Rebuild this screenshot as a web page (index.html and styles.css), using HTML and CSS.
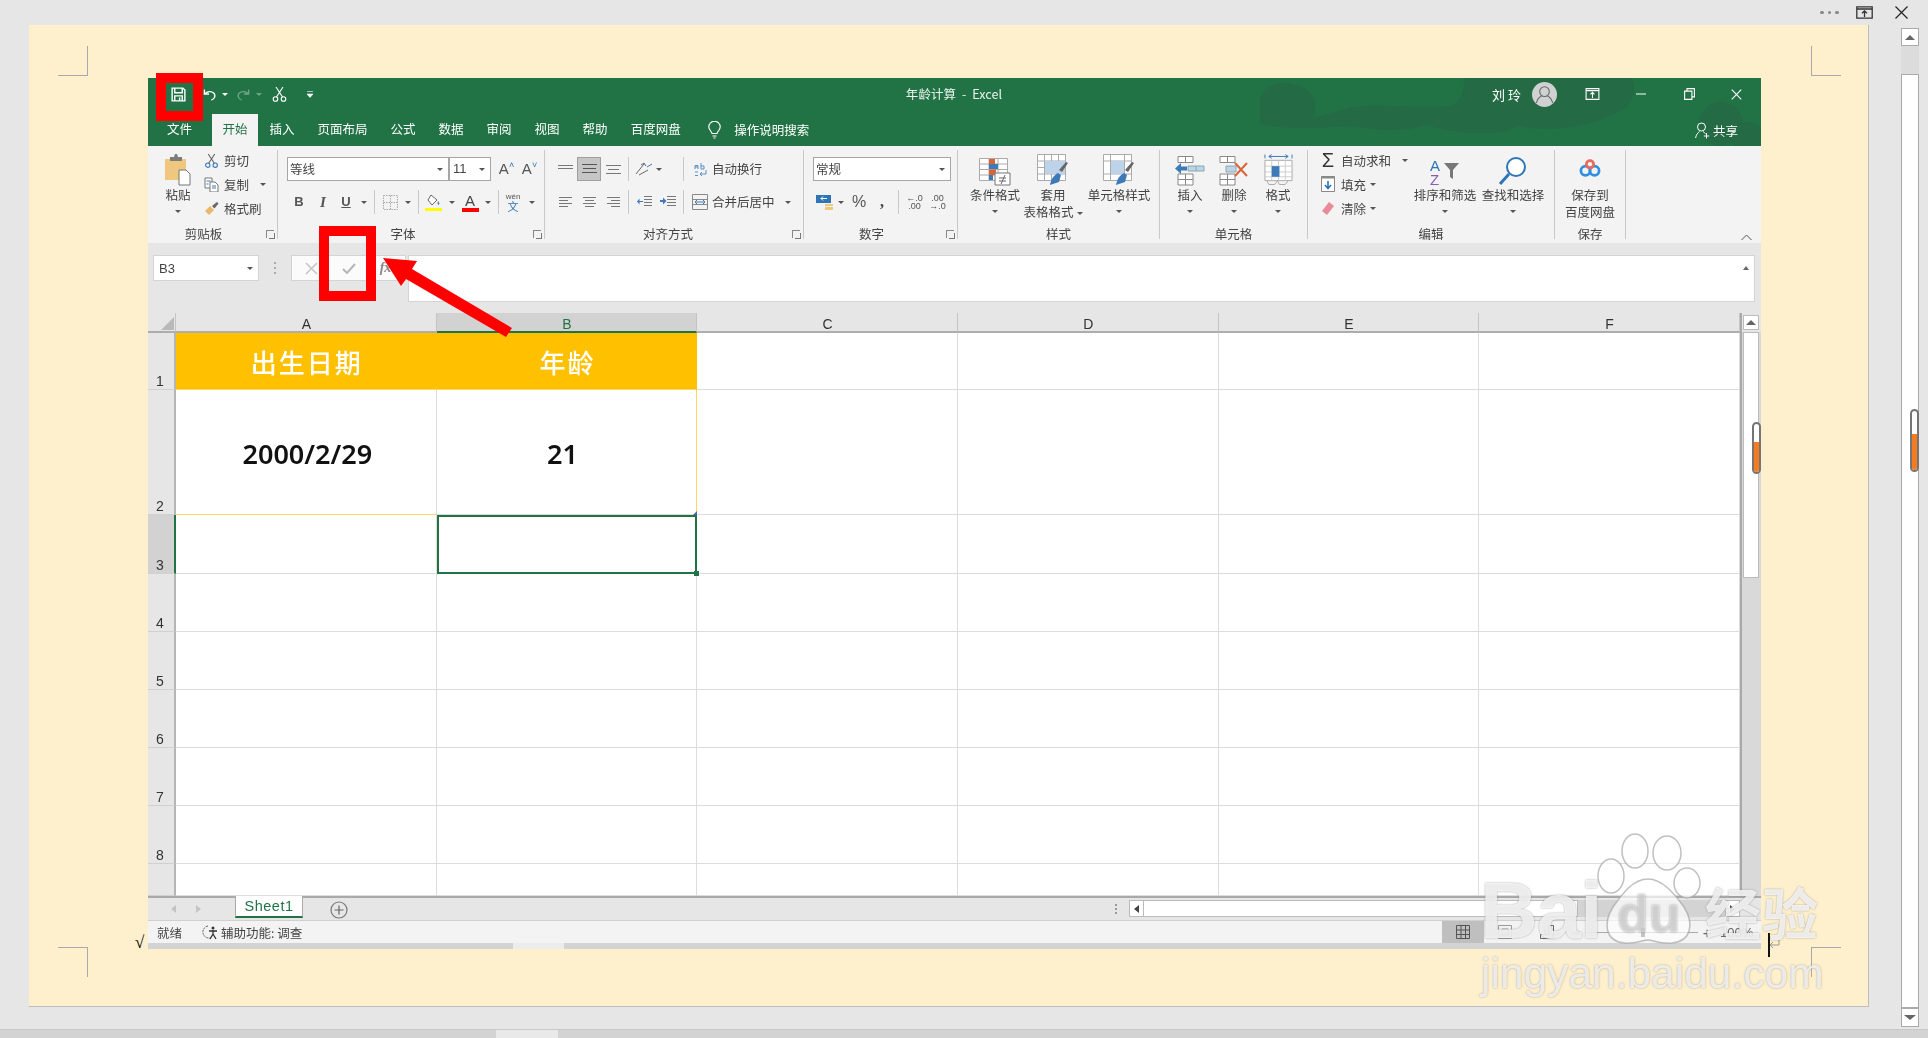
FILE: index.html
```html
<!DOCTYPE html>
<html lang="zh-CN">
<head>
<meta charset="utf-8">
<title>年龄计算 - Excel</title>
<link rel="stylesheet" href="styles.css">
</head>
<body>
<div class="screen">
  <header class="app-top">
    <span class="dots"><i></i><i></i><i></i></span>
    <svg class="top-ico" width="17" height="13" viewBox="0 0 17 13"><path d="M.8.8h15.400v11.400H.8zM1 3h15M8.500 11V5M6 7.200l2.500-2.400L11 7.200" fill="none" stroke="#333" stroke-width="1.300"/></svg>
    <svg class="top-x" width="13" height="13" viewBox="0 0 13 13"><path d="M.5.500l12 12M12.500.5l-12 12" stroke="#222" stroke-width="1.200"/></svg>
  </header>
  <div class="workspace">
    <main class="page">
      <section class="excel">
        <div class="green">
          <svg class="art" width="1613" height="68" viewBox="0 0 1613 68"><path d="M1112 30C1108 10 1130 2 1145 6c20 4 27 19 20 34l35-10c30-5 60 0 100-2 15-3 16-18 16-28h168c6 15-2 30-14 34-30 16-70 21-100 14-20 12-70 7-90-1-30 8-55 5-80 1-30 2-60 4-88-2z" fill="#246a44"/><circle cx="1573" cy="46" r="22" fill="#246a44"/><circle cx="1600" cy="60" r="16" fill="#246a44"/></svg>
          <div class="titlebar">
            <div class="qat">
              <svg class="q-save" width="15" height="15" viewBox="0 0 16 16"><path d="M1.200 1.200h11.500l2.100 2.100v11.500H1.200zM4 1.200v5h8v-5M4 14.800V9.500h8v5.300M9.200 11.200v3.400" fill="none" stroke="#fff" stroke-width="1.500"/></svg>
              <svg class="q-undo" width="13" height="13" viewBox="0 0 14 14"><path d="M1.500 1.500v5h5M2 6.500C4 3.500 9 3 11.500 5.500S12.500 12 9 13" fill="none" stroke="#fff" stroke-width="1.500"/></svg>
              <span class="dd dd-w q-dd"></span>
              <svg class="q-redo" width="13" height="13" viewBox="0 0 14 14"><path d="M12.500 1.500v5h-5M12 6.500C10 3.500 5 3 2.500 5.500S1.500 12 5 13" fill="none" stroke="#6ea388" stroke-width="1.500"/></svg>
              <span class="dd dd-dim q-dd"></span>
              <svg class="q-cut" width="15" height="16" viewBox="0 0 15 16"><circle cx="3.500" cy="13" r="2.300" fill="none" stroke="#fff" stroke-width="1.100"/><circle cx="11.500" cy="13" r="2.300" fill="none" stroke="#fff" stroke-width="1.100"/><path d="M4.500 11L11 1M10.500 11L4 1" stroke="#fff" stroke-width="1.100"/></svg>
              <svg class="q-more" width="6" height="7" viewBox="0 0 6 7"><path d="M0 .5h6M0 3h6L3 6.500z" fill="#fff" stroke="#fff" stroke-width=".6"/></svg>
            </div>
            <div class="doc-title">年龄计算&nbsp; -&nbsp; Excel</div>
            <div class="account">
              <span class="user">刘 玲</span>
              <svg class="avatar" width="25" height="25" viewBox="0 0 26 26"><circle cx="13" cy="13" r="13" fill="#cfd2d0"/><circle cx="13" cy="10" r="5" fill="none" stroke="#666" stroke-width="1.100"/><path d="M4.500 22c1-5 4-7 6-8M21.500 22c-1-5-4-7-6-8" fill="none" stroke="#666" stroke-width="1.100"/></svg>
              <svg class="w-ribbon" width="15" height="12" viewBox="0 0 14 12"><path d="M.6.600h12.800v10.800H.6zM.6 2.600h12.800M7 10V4.500M5 6.300l2-2 2 2" fill="none" stroke="#fff" stroke-width="1.100"/></svg>
              <svg class="w-min" width="10" height="2" viewBox="0 0 11 2"><path d="M0 1h11" stroke="#fff" stroke-width="1.100"/></svg>
              <svg class="w-rest" width="11" height="12" viewBox="0 0 11 12"><path d="M.6 3.100h7.300v8.300H.6zM3 3V.6h7.400v8.300H8" fill="none" stroke="#fff" stroke-width="1.100"/></svg>
              <svg class="w-close" width="11" height="11" viewBox="0 0 12 12"><path d="M.8.800l10.400 10.400M11.200.8L.8 11.200" stroke="#fff" stroke-width="1.200"/></svg>
            </div>
          </div>
          <nav class="tabs">
            <span class="tab tab-file">文件</span>
            <span class="tab tab-active">开始</span>
            <span class="tab">插入</span>
            <span class="tab">页面布局</span>
            <span class="tab">公式</span>
            <span class="tab">数据</span>
            <span class="tab">审阅</span>
            <span class="tab">视图</span>
            <span class="tab">帮助</span>
            <span class="tab">百度网盘</span>
            <svg class="bulb" width="13" height="18" viewBox="0 0 13 18"><path d="M4 12.500C3.500 10 .8 9 .8 6a5.700 5.700 0 0 1 11.400 0c0 3-2.700 4-3.200 6.500zM4.500 15h4M5.500 17h2" fill="none" stroke="#fff" stroke-width="1.100"/></svg>
            <span class="search">操作说明搜索</span>
            <span class="share"><svg width="15" height="17" viewBox="0 0 15 17"><circle cx="6.500" cy="5" r="4" fill="none" stroke="#fff"/><path d="M.6 16c.4-3 2-5 4-6.500M8 9.500c1 .6 1.800 1.300 2.400 2.300M11.500 11v5.500M8.800 14h5.400" fill="none" stroke="#fff"/></svg>共享</span>
          </nav>
        </div>

        <div class="ribbon">
          <div class="group g-clip">
            <div class="g-body clip-body">
              <div class="big paste">
                <svg class="big-ico" width="28" height="32" viewBox="0 0 28 32"><path d="M1 5h21v21H1z" fill="#efc77e"/><path d="M6 3h4l1-3h2l1 3h4v4H6z" fill="#7d7d7d"/><path d="M15 16h7l4 4v11H15z" fill="#fff" stroke="#777"/></svg>
                <span>粘贴</span>
                <span class="dd big-dd"></span>
              </div>
              <div class="small-list">
                <div class="small"><svg width="14" height="15" viewBox="0 0 15 16"><circle cx="3.500" cy="13" r="2.300" fill="none" stroke="#3d7ab8" stroke-width="1.200"/><circle cx="11.500" cy="13" r="2.300" fill="none" stroke="#3d7ab8" stroke-width="1.200"/><path d="M4.500 11L11 1M10.500 11L4 1" stroke="#666" stroke-width="1.200"/></svg><span>剪切</span></div>
                <div class="small"><svg width="15" height="15" viewBox="0 0 15 15"><path d="M1 1h7v10H1z" fill="#fff" stroke="#777"/><path d="M6 5h5l3 3v7H6z" fill="#fff" stroke="#777"/><path d="M2.500 4h4M2.500 7h2M8 9h4M8 11h4" stroke="#3d7ab8"/></svg><span>复制</span><span class="dd copy-dd"></span></div>
                <div class="small"><svg width="15" height="14" viewBox="0 0 15 14"><path d="M1 10l5-5 4 4-5 5z" fill="#e8b96b"/><path d="M8 5l5-4 1.500 1.500-4 5z" fill="#666"/></svg><span>格式刷</span></div>
              </div>
            </div>
            <div class="g-label lb-clip">剪贴板</div>
            <span class="launcher"></span>
          </div>

          <div class="group g-font">
            <div class="g-body rows">
              <div class="font-r1">
                <div class="combo font-name"><span>等线</span><span class="dd"></span></div>
                <div class="combo font-size"><span>11</span><span class="dd"></span></div>
                <span class="aa">A<sup>˄</sup></span>
                <span class="aa">A<sup>˅</sup></span>
              </div>
              <div class="font-r2 cells-c">
                <b class="fb">B</b>
                <i class="fb fi">I</i>
                <u class="fb">U</u>
                <span class="dd"></span>
                <span class="vsep"></span>
                <svg width="15" height="15" viewBox="0 0 15 15"><path d="M.5.500h14v14H.5zM7.500.5v14M.5 7.500h14" fill="none" stroke="#aaa" stroke-dasharray="1.500 1"/></svg>
                <span class="dd"></span>
                <span class="vsep"></span>
                <svg width="17" height="17" viewBox="0 0 17 17"><path d="M6 1l6 5-5 5-4-5z" fill="#fff" stroke="#666"/><path d="M13 7c1 1.500 2 2.500 1 3.500s-2-.5-1-3.500z" fill="#3d7ab8"/><path d="M0 14h17v3H0z" fill="#ff0"/></svg>
                <span class="dd"></span>
                <span class="fcolor">A</span>
                <span class="dd"></span>
                <span class="vsep"></span>
                <span class="wen"><small>wén</small>文</span>
                <span class="dd"></span>
              </div>
            </div>
            <div class="g-label lb-font">字体</div>
            <span class="launcher"></span>
          </div>

          <div class="group g-align">
            <div class="g-body rows">
              <div class="align-r align-r1 cells-c">
                <svg width="15" height="9" viewBox="0 0 15 9"><path d="M0 .5h15M0 3.500h15" stroke="#777"/></svg>
                <span class="sel-box"><svg width="15" height="10" viewBox="0 0 15 10"><path d="M0 .5h15M1 4.500h13M0 8.500h15" stroke="#555"/></svg></span>
                <svg width="15" height="9" viewBox="0 0 15 9"><path d="M0 .5h15M2 4.500h11M0 8.500h15" stroke="#777"/></svg>
                <span class="vsep"></span>
                <svg width="18" height="14" viewBox="0 0 18 14"><path d="M1 12L9 2M4 13l9-5M6 3l3-2 2 3" fill="none" stroke="#666"/><path d="M12 5l5-3" stroke="#3d7ab8"/></svg>
                <span class="dd orient-dd"></span>
                <span class="vsep"></span>
                <svg width="14" height="15" viewBox="0 0 14 15"><path d="M2 7V3.500h3V7M2 5h3M8 1v6h3V4H8M2 10h3M2 13.500h3M13 8v4H7M9 10l-2 2 2 2" fill="none" stroke="#5b8fc7"/></svg>
                <span class="t12">自动换行</span>
              </div>
              <div class="align-r cells-c">
                <svg width="13" height="10" viewBox="0 0 13 10"><path d="M0 .5h13M0 3.500h9M0 6.500h13M0 9.500h9" stroke="#777"/></svg>
                <svg width="13" height="10" viewBox="0 0 13 10"><path d="M0 .5h13M2 3.500h9M0 6.500h13M2 9.500h9" stroke="#777"/></svg>
                <svg width="13" height="10" viewBox="0 0 13 10"><path d="M0 .5h13M4 3.500h9M0 6.500h13M4 9.500h9" stroke="#777"/></svg>
                <span class="vsep"></span>
                <svg width="15" height="12" viewBox="0 0 15 12"><path d="M7 .5h8M7 3.500h8M7 6.500h8M7 9.500h8" stroke="#777"/><path d="M6 5H2.500V2.500L0 5.500l2.500 3V6H6z" fill="#3d7ab8"/></svg>
                <svg width="16" height="12" viewBox="0 0 16 12"><path d="M7 .5h9M7 3.500h9M7 6.500h9M7 9.500h9" stroke="#777"/><path d="M0 4h3V1.500L6.500 5 3 8.500V6H0z" fill="#3d7ab8"/></svg>
                <span class="vsep"></span>
                <svg width="16" height="16" viewBox="0 0 16 16"><path d="M.5.500h15v15H.5zM.5 5.500h15M.5 10.500h15" fill="none" stroke="#888"/><path d="M3 8h10M3 8l2-2M3 8l2 2M13 8l-2-2M13 8l-2 2" fill="none" stroke="#3d7ab8"/></svg>
                <span class="t12">合并后居中</span>
              </div>
              <span class="dd merge-dd"></span>
            </div>
            <div class="g-label lb-align">对齐方式</div>
            <span class="launcher"></span>
          </div>

          <div class="group g-num">
            <div class="g-body rows">
              <div class="font-r1"><div class="combo num-fmt"><span>常规</span><span class="dd"></span></div></div>
              <div class="num-r cells-c">
                <svg width="17" height="15" viewBox="0 0 17 15"><path d="M0 0h15v8H0z" fill="#2e75b6"/><path d="M5 3.500h6M5 3.500l2-2M5 3.500l2 2" stroke="#fff" fill="none"/><path d="M9 9h8v2H9zM9 12h8v3H9z" fill="#efc77e"/></svg>
                <span class="dd"></span>
                <span class="pct">%</span>
                <span class="comma">,</span>
                <span class="vsep"></span>
                <span class="dec"><span>←.0</span><span>.00</span></span>
                <span class="dec"><span>.00</span><span>→.0</span></span>
              </div>
            </div>
            <div class="g-label lb-num">数字</div>
            <span class="launcher"></span>
          </div>

          <div class="group g-style">
            <div class="g-body style-body">
              <div class="big">
                <svg class="big-ico" width="32" height="28" viewBox="0 0 32 28"><path d="M.5.500h28v22H.5zM10 .5v22M19 .5v22M.5 6h28M.5 11.500h28M.5 17h28" fill="#fff" stroke="#aaa"/><path d="M10 1h6v5h-6z" fill="#d9643a"/><path d="M10 6h9v5h-9z" fill="#3d7ab8"/><path d="M10 11.500h7V17h-7z" fill="#d9643a"/><path d="M10 17h4v5h-4z" fill="#3d7ab8"/><path d="M16 15h15v12H16z" fill="#fff" stroke="#777"/><path d="M20 20h7M20 23h7M26 17l-4 9" stroke="#666" fill="none"/></svg>
                <span>条件格式</span><span class="dd big-dd"></span>
              </div>
              <div class="big">
                <svg class="big-ico" width="32" height="32" viewBox="0 0 32 32"><path d="M.5.500h28v26H.5zM7.500.5v26M14.500.5v26M21.500.5v26M.5 7h28M.5 13.500h28M.5 20h28" fill="#fff" stroke="#aaa"/><path d="M8 7h20v13H8z" fill="#bcd3ea"/><path d="M31 9l-6 9-3-2 7-8z" fill="#666"/><path d="M21 19l3 2-2 7-9 3c1-6 4-10 8-12z" fill="#3d7ab8"/></svg>
                <span class="two">套用<br>表格格式<span class="dd inline-dd"></span></span>
              </div>
              <div class="big">
                <svg class="big-ico" width="32" height="32" viewBox="0 0 32 32"><path d="M.5.500h28v26H.5zM7.500.5v26M21.500.5v26M.5 7h28M.5 20h28" fill="#fff" stroke="#aaa"/><path d="M8 7h13v13H8z" fill="#bcd3ea"/><path d="M31 9l-6 9-3-2 7-8z" fill="#666"/><path d="M21 19l3 2-2 7-9 3c1-6 4-10 8-12z" fill="#3d7ab8"/></svg>
                <span>单元格样式</span><span class="dd big-dd"></span>
              </div>
            </div>
            <div class="g-label">样式</div>
          </div>

          <div class="group g-cell">
            <div class="g-body cell-body">
              <div class="big">
                <svg class="big-ico" width="30" height="30" viewBox="0 0 30 30"><path d="M3 .5h15v6H3zM10.500.5v6M3 18h15v11H3zM3 23.500h15M10.500 18v11" fill="#fff" stroke="#888"/><path d="M13 10h16v5H13zM21 10v5" fill="#bcd3ea" stroke="#8aa"/><path d="M0 12.500L6 7v3.500h6v4H6V18z" fill="#3d7ab8"/></svg>
                <span>插入</span><span class="dd big-dd"></span>
              </div>
              <div class="big">
                <svg class="big-ico" width="30" height="30" viewBox="0 0 30 30"><path d="M1 .5h15v6H1zM8.500.5v6M1 18h15v11H1zM1 23.500h15M8.500 18v11" fill="#fff" stroke="#888"/><path d="M7 10h10v6H7z" fill="#bcd3ea" stroke="#8aa"/><path d="M16 7l12 13M28 7L16 20" stroke="#d9643a" stroke-width="2"/></svg>
                <span>删除</span><span class="dd big-dd"></span>
              </div>
              <div class="big">
                <svg class="big-ico" width="29" height="32" viewBox="0 0 30 32"><path d="M1 6h28v21H1z" fill="#fff" stroke="#aaa"/><path d="M1 12h28M1 18h28M1 23h28M8 6v21M15 6v21M22 6v21" stroke="#ccc"/><path d="M8 12h8v11H8z" fill="#3d7ab8"/><path d="M5 2h20M5 2l3-2M5 2l3 2M25 2l-3-2M25 2l-3 2M1 0v4M29 0v4" stroke="#3d7ab8" fill="none"/><path d="M3 27l2 4h6l3-4M14 27l2 4h6l3-4" fill="none" stroke="#aaa"/></svg>
                <span>格式</span><span class="dd big-dd"></span>
              </div>
            </div>
            <div class="g-label">单元格</div>
          </div>

          <div class="group g-edit">
            <div class="g-body edit-body">
              <div class="small-list edit-list">
                <div class="small"><span class="sigma">Σ</span><span>自动求和</span><span class="dd sum-dd"></span></div>
                <div class="small"><svg width="14" height="16" viewBox="0 0 14 16"><path d="M.5.500h13v15H.5z" fill="#fff" stroke="#888"/><path d="M.5.500h13v2H.5z" fill="#888"/><path d="M7 5v7M4 9l3 3.500L10 9" fill="none" stroke="#2e75b6" stroke-width="1.600"/></svg><span>填充</span><span class="dd tight-dd"></span></div>
                <div class="small"><svg width="14" height="15" viewBox="0 0 14 15"><path d="M8 1l5 4-7 9-5-4z" fill="#e78a9a"/></svg><span>清除</span><span class="dd tight-dd"></span></div>
              </div>
              <div class="big">
                <svg class="big-ico" width="30" height="28" viewBox="0 0 30 28"><text x="0" y="13" class="az az-a">A</text><text x="0" y="27" class="az az-z">Z</text><path d="M14 5h15l-6 7v9l-3-2v-7z" fill="#777"/></svg>
                <span>排序和筛选</span><span class="dd big-dd"></span>
              </div>
              <div class="big">
                <svg class="big-ico" width="30" height="30" viewBox="0 0 30 30"><circle cx="18" cy="11" r="9" fill="#fff" stroke="#2e75b6" stroke-width="2"/><path d="M11 18L2 28" stroke="#2e75b6" stroke-width="3"/></svg>
                <span>查找和选择</span><span class="dd big-dd"></span>
              </div>
            </div>
            <div class="g-label">编辑</div>
          </div>

          <div class="group g-save">
            <div class="g-body save-body">
              <div class="big">
                <svg class="big-ico save-ico" width="22" height="20" viewBox="0 0 24 22"><circle cx="7" cy="14" r="5" fill="none" stroke="#2e8fe0" stroke-width="3"/><circle cx="17" cy="14" r="5" fill="none" stroke="#2e8fe0" stroke-width="3"/><circle cx="12" cy="7" r="4" fill="none" stroke="#e76a5a" stroke-width="3"/></svg>
                <span class="two">保存到<br>百度网盘</span>
              </div>
            </div>
            <div class="g-label">保存</div>
          </div>
          <svg class="collapse" width="11" height="7" viewBox="0 0 11 7"><path d="M.5 6l5-5 5 5" fill="none" stroke="#555"/></svg>
        </div>

        <div class="formula">
          <div class="namebox"><span>B3</span><span class="dd"></span></div>
          <span class="fdots"></span>
          <div class="fbtns">
            <svg width="13" height="13" viewBox="0 0 13 13"><path d="M1 1l11 11M12 1L1 12" stroke="#c4c4c4" stroke-width="1.500"/></svg>
            <svg width="14" height="11" viewBox="0 0 14 11"><path d="M1 6l4 4 8-9" fill="none" stroke="#b5b5b5" stroke-width="2"/></svg>
            <span class="fx">fx</span>
          </div>
          <div class="finput"><span class="fcaret"></span></div>
        </div>

        <div class="sheet">
          <div class="grid">
            <div class="corner"><svg width="13" height="13" viewBox="0 0 13 13"><path d="M13 0v13H0z" fill="#b9b9b9"/></svg></div>
            <div class="ch">A</div><div class="ch ch-sel">B</div><div class="ch">C</div><div class="ch">D</div><div class="ch">E</div><div class="ch">F</div>

            <div class="rh">1</div>
            <div class="c c-head">出生日期</div><div class="c c-head c-b">年龄</div><div class="c"></div><div class="c"></div><div class="c"></div><div class="c"></div>

            <div class="rh">2</div>
            <div class="c c-val c-yb">2000/2/29</div><div class="c c-val c-yr c-age">21<span class="err"></span></div><div class="c"></div><div class="c"></div><div class="c"></div><div class="c"></div>

            <div class="rh rh-sel">3</div>
            <div class="c"></div><div class="c c-sel"><span class="handle"></span></div><div class="c"></div><div class="c"></div><div class="c"></div><div class="c"></div>

            <div class="rh">4</div><div class="c"></div><div class="c"></div><div class="c"></div><div class="c"></div><div class="c"></div><div class="c"></div>
            <div class="rh">5</div><div class="c"></div><div class="c"></div><div class="c"></div><div class="c"></div><div class="c"></div><div class="c"></div>
            <div class="rh">6</div><div class="c"></div><div class="c"></div><div class="c"></div><div class="c"></div><div class="c"></div><div class="c"></div>
            <div class="rh">7</div><div class="c"></div><div class="c"></div><div class="c"></div><div class="c"></div><div class="c"></div><div class="c"></div>
            <div class="rh">8</div><div class="c"></div><div class="c"></div><div class="c"></div><div class="c"></div><div class="c"></div><div class="c"></div>
            <div class="rh"></div><div class="c"></div><div class="c"></div><div class="c"></div><div class="c"></div><div class="c"></div><div class="c"></div>
          </div>
          <div class="vscroll">
            <span class="vs-btn"><i class="up"></i></span>
            <span class="vs-thumb"></span>
          </div>
        </div>

        <div class="tabbar">
          <span class="nav"><i class="tri-l"></i><i class="tri-r"></i></span>
          <span class="sheet-tab">Sheet1</span>
          <svg class="add" width="18" height="18" viewBox="0 0 18 18"><circle cx="9" cy="9" r="8" fill="none" stroke="#777" stroke-width="1.200"/><path d="M9 4.500v9M4.500 9h9" stroke="#666" stroke-width="1.200"/></svg>
          <span class="h-dots"></span>
          <span class="hs-btn"><i class="tri-l dark"></i></span>
          <span class="hs-thumb"></span>
          <span class="hs-track"></span>
          <span class="hs-btn"><i class="tri-r dark"></i></span>
        </div>

        <div class="status">
          <span class="ready">就绪</span>
          <svg class="acc" width="16" height="15" viewBox="0 0 16 15"><path d="M6 1a6 6 0 1 0 2 12" fill="none" stroke="#555" stroke-dasharray="2 1"/><circle cx="11" cy="3" r="1.500" fill="#333"/><path d="M7 6h8M11 5v4l-3 5M11 9l3 5" fill="none" stroke="#333" stroke-width="1.300"/></svg>
          <span class="acc-t">辅助功能: 调查</span>
          <div class="views">
            <span class="view view-sel"><svg width="14" height="14" viewBox="0 0 14 14"><path d="M.5.500h13v13H.5zM5 .5v13M9.500.5v13M.5 5h13M.5 9.500h13" fill="none" stroke="#555"/></svg></span>
            <span class="view"><svg width="14" height="14" viewBox="0 0 14 14"><path d="M.5.500h13v13H.5zM4 4h6v6H4z" fill="none" stroke="#999"/></svg></span>
            <span class="view"><svg width="14" height="14" viewBox="0 0 14 14"><path d="M.5 13.500h13V.5H9v9H.5zM5 9.500V4" fill="none" stroke="#666"/></svg></span>
            <span class="zoom-ctrl"><span>−</span><span class="slider"><i></i></span><span>+</span></span>
            <span class="pct100">100%</span>
          </div>
        </div>
        <div class="strip"><span></span></div>
      </section>
    </main>
    <aside class="doc-scroll">
      <span class="ds-btn"><i class="up"></i></span>
      <span class="ds-track"></span>
      <span class="ds-thumb"></span>
      <span class="ds-btn ds-down"><i class="down"></i></span>
    </aside>
  </div>
  <footer class="hscroll"><span></span></footer>

  <span class="mark m-tl"></span><span class="mark m-tr"></span><span class="mark m-bl"></span><span class="mark m-br"></span>
  <span class="sqrt">√</span>
  <span class="cursor"></span>
  <svg class="para" width="11" height="9" viewBox="0 0 11 9"><path d="M10 0v5H1M4 2L1 5l3 3" fill="none" stroke="#999"/></svg>
  <span class="handle-o h1"><i></i></span>
  <span class="handle-o h2"><i></i></span>
  <span class="redbox r-save"></span>
  <span class="redbox r-check"></span>
  <svg class="arrow" width="140" height="90" viewBox="380 254 140 90"><path d="M383 258l34 3-5 8 100 59-6 9-100-58-5 7z" fill="#f00"/></svg>
  <div class="wm">
    <svg class="wm-paw" width="112" height="116" viewBox="0 0 112 116"><g fill="rgba(255,255,255,.68)" stroke="rgba(165,165,165,.7)" stroke-width="1.500"><ellipse cx="40" cy="20" rx="13" ry="17"/><ellipse cx="72" cy="22" rx="14" ry="17"/><ellipse cx="16" cy="45" rx="13" ry="17"/><ellipse cx="92" cy="52" rx="13" ry="15"/><path d="M53 48c14 0 26 14 36 28 10 16 8 34-12 36-14 1-18-3-24-3s-12 4-24 3C10 110 8 92 18 76c10-14 20-28 35-28z"/></g></svg>
    <span class="wm-bai">Bai</span>
    <span class="wm-du">du</span>
    <span class="wm-jy">经验</span>
    <span class="wm-url">jingyan.baidu.com</span>
  </div>
</div>
</body>
</html>
```
FILE: styles.css
```css
*{box-sizing:border-box}
html,body{margin:0;padding:0;background:#e6e6e6}
body{font-family:"Noto Sans CJK SC","Noto Sans",sans-serif;color:#444}
i{display:block}
svg{display:block;flex:none}

.screen{position:relative;width:1928px;height:1038px;overflow:hidden;display:flex;flex-direction:column;background:#e6e6e6}
.app-top{height:25px;flex:none;display:flex;align-items:center;padding-left:1820px}
.dots{display:flex;gap:4px;width:36px}
.dots i{width:3.500px;height:3.500px;border-radius:50%;background:#888}
.top-x{margin-left:22px}
.workspace{display:flex;height:1004px;flex:none;padding-left:29px}
.page{width:1840px;height:982px;background:#fff0cd;border-right:1px solid #bdbdbd;border-bottom:1px solid #bdbdbd;padding:53px 0 0 119px}
.doc-scroll{margin-left:32px;width:18px;display:flex;flex-direction:column;padding-top:3px}
.ds-btn{width:18px;height:18px;background:#fff;border:1px solid #aaa;display:flex;align-items:center;justify-content:center;flex:none}
.ds-track{height:28px;background:#dcdcdc;flex:none}
.ds-thumb{height:934px;background:#fff;border:1px solid #aaa;flex:none}
.ds-down{height:19px}
.up{width:0;height:0;border:5px solid transparent;border-top:0;border-bottom:5px solid #666}
.down{width:0;height:0;border:6px solid transparent;border-bottom:0;border-top:5px solid #666}
.hscroll{height:9px;background:#d3d3d3;flex:none;padding-left:496px;border-top:1px solid #c8c8c8}
.hscroll span{display:block;width:62px;height:100%;background:#e9e9e9}

.excel{width:1613px;height:871px;display:flex;flex-direction:column;background:#f3f3f3;filter:blur(.35px)}
.green{position:relative;background:#217346;height:68px;flex:none;color:#fff;font-size:12.500px;overflow:hidden}
.art{position:absolute;left:0;top:0}
.titlebar{position:relative;height:36px;display:flex;align-items:center;padding-bottom:4px}
.qat{width:600px;display:flex;align-items:center;padding-left:23px}
.q-undo{margin-left:17px}
.q-dd{margin-left:6px}
.q-redo{margin-left:9px}
.q-cut{margin-left:10px}
.q-more{margin-left:20px}
.doc-title{width:412px;text-align:center;font-size:12.500px;letter-spacing:.1px;color:#eaf3ee;margin-top:-2px}
.account{margin-left:auto;display:flex;align-items:center;padding-right:19px}
.user{font-size:13px;margin-right:11px}
.w-ribbon{margin-left:28px}
.w-min{margin-left:36px}
.w-rest{margin-left:38px}
.w-close{margin-left:36px}
.tabs{position:relative;height:32px;display:flex;align-items:center;padding-left:7.500px}
.tab{padding:0 11.500px;height:32px;line-height:29px;white-space:nowrap}
.tab-active{background:#f3f3f3;color:#217346;padding:0 10.500px;margin-left:8.500px;width:46px}
.bulb{margin-left:16px}
.search{margin-left:13px;margin-top:-2px}
.share{margin-left:auto;margin-right:23px;display:flex;align-items:center;gap:3px}

.dd{display:inline-block;width:0;height:0;border:3px solid transparent;border-bottom:0;border-top:3.500px solid #555;flex:none}
.dd-w{border-top-color:#fff}
.dd-dim{border-top-color:#6ea388}

.ribbon{position:relative;height:97px;flex:none;background:#f3f3f3;display:flex;padding-top:4px;font-size:12.500px;line-height:17px;color:#444}
.group{position:relative;height:89px;border-right:1px solid #c9c9c9;display:flex;flex-direction:column;flex:none}
.g-body{height:77px;flex:none}
.g-label{height:14px;line-height:13px;text-align:center;white-space:nowrap}
.launcher{position:absolute;right:3px;bottom:1px;width:8px;height:8px;border-left:1px solid #888;border-top:1px solid #888}
.launcher::after{content:"";position:absolute;left:2px;top:2px;width:5px;height:5px;border-right:1px solid #777;border-bottom:1px solid #777}
.g-clip{width:130px}
.g-font{width:267px}
.g-align{width:259px}
.g-num{width:154px}
.g-style{width:202px}
.g-cell{width:148px}
.g-edit{width:247px}
.g-save{width:71px}
.lb-clip{padding-right:18px}
.lb-font{padding-right:16px}
.lb-align{padding-right:12px}
.lb-num{padding-right:18px}

.big{display:grid;grid-template-rows:33px auto auto;align-content:start;padding-top:3px;justify-items:center;white-space:nowrap}
.big-ico{align-self:end;overflow:visible}
.big-dd{margin-top:7px}
.two{text-align:center}
.inline-dd{margin-left:3px;vertical-align:middle}
.clip-body{display:flex}
.clip-body .paste{width:56px;padding-left:4px}
.small-list{display:flex;flex-direction:column;margin-top:-2px}
.small{height:24px;display:flex;align-items:center;white-space:nowrap}
.g-clip .small svg{width:15px;margin-right:5px}
.copy-dd{margin-left:11px}
.rows{display:flex;flex-direction:column;padding:7px 0 0 9px;gap:9px;position:relative}
.font-r1{height:24px;display:flex;align-items:center}
.combo{height:24px;background:#fff;border:1px solid #a6a6a6;display:flex;align-items:center;justify-content:space-between;padding:0 5px 0 2px;line-height:20px;font-size:12.500px}
.font-name{width:162px}
.font-size{width:42px;margin-right:4px;font-family:"Liberation Sans",sans-serif;padding-left:3px;font-size:13px}
.aa{width:23px;text-align:center;font:15px/20px "Liberation Sans",sans-serif;color:#555}
.aa sup{font-size:9px;line-height:0;color:#2e75b6}
.cells-c{display:grid;align-items:center;justify-items:center;height:24px}
.font-r2{grid-template-columns:24px 24px 22px 14px 6px 26px 10px 10px 20px 18px 18px 18px 2px 28px 10px}
.fb{font:bold 13px/20px "Liberation Sans",sans-serif;color:#555}
.fi{font-style:italic;font-family:"Liberation Serif",serif;font-size:15px}
.vsep{display:block;width:1px;height:24px;background:#c9c9c9}
.fcolor{width:17px;height:19px;text-align:center;font:15px/15px "Liberation Sans",sans-serif;color:#444;border-bottom:4px solid #f00}
.wen{display:flex;flex-direction:column;align-items:center;line-height:10px;font-size:11px;color:#2e75b6}
.wen small{font:8px/8px "Liberation Sans",sans-serif;color:#555}
.align-r{grid-template-columns:23px 24px 24px 6px 26px 21px 10px 24px auto}
.sel-box{width:24px;height:24px;background:#c6c6c6;border:1px solid #9f9f9f;display:flex;align-items:center;justify-content:center}
.orient-dd{justify-self:start;margin-left:-1px}
.t12{justify-self:start;white-space:nowrap;margin-top:-2px}
.merge-dd{position:absolute;left:240px;top:51px}
.num-fmt{width:138px}
.num-r{grid-template-columns:22px 12px 24px 22px 10px 23px 23px}
.pct{font:16px/20px "Liberation Sans",sans-serif;color:#555}
.comma{font:bold 16px/14px "Liberation Serif",serif;color:#444}
.dec{display:flex;flex-direction:column;font:9px/8px "Liberation Sans",sans-serif;color:#555;align-items:center;white-space:nowrap}
.style-body{display:grid;grid-template-columns:54px 62px 70px;padding-left:10px;justify-items:center}
.cell-body{display:grid;grid-template-columns:44px 44px 44px;padding-left:8px;justify-items:center}
.edit-body{display:grid;grid-template-columns:101px 72px 64px;justify-items:center}
.edit-list{justify-self:start;padding-left:13px}
.edit-list .small svg,.sigma{width:14px;margin-right:6px;text-align:center}
.sigma{font:20px/20px "Liberation Sans",sans-serif;color:#333}
.sum-dd{margin-left:11px}
.tight-dd{margin-left:4px}
.save-body{display:flex;justify-content:center}
.save-ico{align-self:start;margin-top:5px}
.az{font:15px "Liberation Sans",sans-serif}
.az-a{fill:#2e75b6}
.az-z{fill:#8a5bb5}
.collapse{position:absolute;left:1593px;top:88px}

.formula{height:70px;flex:none;background:#e6e6e6;display:flex;align-items:flex-start;padding:12px 0 0 5px;font-size:12.500px}
.namebox{width:106px;height:26px;background:#fff;border:1px solid #d4d4d4;display:flex;align-items:center;justify-content:space-between;padding:0 5px;font-family:"Liberation Sans",sans-serif;font-size:13px}
.fdots{width:2px;height:12px;margin:7px 15px 0 15px;background:repeating-linear-gradient(#aaa 0 2px,transparent 2px 5px);flex:none}
.fbtns{width:115px;height:26px;background:#fbfbfb;border:1px solid #d4d4d4;display:grid;grid-template-columns:38px 37px 37px;align-items:center;justify-items:center;flex:none}
.fx{font:italic bold 14px "Liberation Serif",serif;color:#888}
.finput{width:1347px;height:47px;margin-left:2px;background:#fff;border:1px solid #d4d4d4;position:relative;flex:none}
.fcaret{position:absolute;right:5px;top:10px;width:0;height:0;border:3.500px solid transparent;border-top:0;border-bottom:4px solid #666}

.sheet{height:583px;flex:none;display:flex;overflow:hidden}
.grid{width:1592px;display:grid;grid-template-columns:28px repeat(6,260.667px);grid-template-rows:20px 57px 125px 59px 58px 58px 58px 58px 58px 32px;background:#fff}
.corner{background:#e6e6e6;border-right:1px solid #c4c4c4;border-bottom:2px solid #adadad;padding:4px 0 0 13px}
.ch{background:#e6e6e6;border-bottom:2px solid #adadad;border-right:1px solid #c4c4c4;text-align:center;font:14px/19px "Liberation Sans",sans-serif;color:#333;padding:2px 0 0 1px}
.ch-sel{background:#d2d2d2;color:#217346;border-bottom-color:#217346}
.rh{background:#e6e6e6;border-right:2px solid #b5b5b5;border-bottom:1px solid #d0d0d0;display:flex;align-items:flex-end;justify-content:center;font:14px/16px "Liberation Sans",sans-serif;color:#333;padding-right:2px}
.rh-sel{background:#d2d2d2;border-right-color:#217346}
.c{background:#fff;border-right:1px solid #dcdcdc;border-bottom:1px solid #dcdcdc;position:relative}
.c-head{background:#ffc000;color:#fff;border-color:#ffc000;border-bottom-color:#ffd86b;display:flex;align-items:center;justify-content:center;font-size:26px;font-weight:500;letter-spacing:2px;padding-left:2px}
.c-val{display:flex;align-items:center;justify-content:center;font:600 27px "Noto Sans",sans-serif;color:#111;padding:2px 0 0 3px}
.c-age{padding:2px 8px 0 0}
.c-yb{border-bottom:1px solid #ffd666}
.c-yr{border-right:1px solid #ffd666}
.err{position:absolute;right:-1px;bottom:-1px;width:0;height:0;border-left:4px solid transparent;border-bottom:4px solid #4a5fbf}
.c-sel{box-shadow:0 0 0 2px #217346 inset;border:0;z-index:1}
.handle{position:absolute;right:-2px;bottom:-2px;width:5px;height:5px;background:#217346;border:0}

.vscroll{width:21px;background:#d9d9d9;display:flex;flex-direction:column;border-left:2px solid #a9a9a9;position:relative;padding-left:1px}
.vs-btn{height:15px;margin:2px 2px 2px 0;background:#fff;border:1px solid #bbb;display:flex;align-items:center;justify-content:center;flex:none;position:relative}
.vscroll::before{content:"";position:absolute;left:0;right:0;top:0;height:19px;background:#e6e6e6;z-index:0}
.vs-btn .up{position:relative}
.vs-thumb{position:relative;height:246px;margin-right:2px;background:#fff;border:1px solid #bbb;flex:none}

.tabbar{height:25px;flex:none;background:#e6e6e6;display:flex;align-items:flex-start;border-top:2px solid #a9a9a9;position:relative;border-bottom:1px solid #d0d0d0}
.nav{width:87px;height:22px;display:flex;align-items:center;gap:20px;padding-left:23px}
.tri-l{width:0;height:0;border:4px solid transparent;border-left:0;border-right:5px solid #c4c4c4}
.tri-r{width:0;height:0;border:4px solid transparent;border-right:0;border-left:5px solid #c4c4c4}
.dark.tri-l{border-right-color:#444}
.dark.tri-r{border-left-color:#444}
.sheet-tab{width:68px;height:22px;margin-top:-2px;background:#fff;border:1px solid #aaa;border-top:0;border-bottom:2px solid #217346;text-align:center;color:#217346;font:14.500px/20px "Liberation Sans",sans-serif;letter-spacing:.5px;flex:none}
.add{margin:3px 0 0 27px}
.h-dots{width:2px;height:10px;margin:6px 0 0 767px;background:repeating-linear-gradient(#999 0 2px,transparent 2px 4px);flex:none}
.hs-btn{width:15px;height:17px;margin-top:2px;background:#fff;border:1px solid #bbb;display:flex;align-items:center;justify-content:center;flex:none}
.h-dots+.hs-btn{margin-left:12px}
.hs-thumb{width:434px;height:17px;margin-top:2px;background:#fff;border:1px solid #bbb;border-left:0;flex:none}
.hs-track{width:147px;height:17px;margin-top:2px;background:#d3d3d3;flex:none}

.status{height:22px;flex:none;background:#f3f3f3;display:flex;align-items:center;font-size:12.500px;padding-left:9px;color:#444}
.acc{margin-left:20px}
.acc-t{margin-left:3px}
.views{margin-left:auto;display:flex;align-items:center;height:22px}
.view{width:42px;height:22px;display:flex;align-items:center;justify-content:center}
.view-sel{background:#bfbfbf}
.zoom-ctrl{display:flex;align-items:center;gap:5px;margin-left:4px;width:140px;font:15px "Liberation Sans",sans-serif;color:#666}
.slider{width:112px;height:1px;background:#aaa;position:relative}
.slider i{position:absolute;left:55px;top:-4px;width:4px;height:9px;background:#444}
.pct100{font:13px "Liberation Sans",sans-serif;color:#666;width:34px;margin:0 7px 0 8px}
.strip{height:6px;flex:none;background:#d3d3d3;padding-left:365px}
.strip span{display:block;width:51px;height:6px;background:#ececec}

.mark{position:absolute;width:30px;height:30px;border:0 solid #a9a9a9}
.m-tl{left:58px;top:46px;border-right-width:1.500px;border-bottom-width:1.500px}
.m-tr{left:1811px;top:46px;border-left-width:1.500px;border-bottom-width:1.500px}
.m-bl{left:58px;top:947px;border-right-width:1.500px;border-top-width:1.500px}
.m-br{left:1811px;top:947px;border-left-width:1.500px;border-top-width:1.500px}
.sqrt{position:absolute;left:135px;top:933px;font:17px/20px "Liberation Serif",serif;color:#000}
.cursor{position:absolute;left:1768px;top:933px;width:1.500px;height:24px;background:#111}
.para{position:absolute;left:1769px;top:940px}
.handle-o{position:absolute;width:9px;border:2px solid #757575;border-radius:5px;background:#fff;display:flex;align-items:flex-end}
.handle-o i{width:100%;background:#f47b20;border-radius:0 0 3px 3px}
.h1{left:1752px;top:422px;height:52px}
.h1 i{height:30px}
.h2{left:1910px;top:409px;height:63px}
.h2 i{height:36px}
.redbox{position:absolute;border:10px solid #f00}
.r-save{left:156px;top:73px;width:47px;height:48px}
.r-check{left:319px;top:226px;width:57px;height:75px}
.arrow{position:absolute;left:380px;top:254px}

.wm{position:absolute;left:0;top:0;width:0;height:0;color:rgba(255,255,255,.8);text-shadow:0 0 2px rgba(110,110,110,.65);white-space:nowrap}
.wm-paw{position:absolute;left:1595px;top:831px;filter:blur(.4px)}
.wm-bai{position:absolute;left:1480px;top:868px;font:bold 80px/86px "Liberation Sans",sans-serif;letter-spacing:-1px}
.wm-du{position:absolute;left:1617px;top:885px;font:bold 52px/58px "Liberation Sans",sans-serif;color:rgba(255,255,255,.5)}
.wm-jy{position:absolute;left:1705px;top:876px;font:bold 56px/70px "Noto Sans CJK SC",sans-serif;letter-spacing:1px}
.wm-url{position:absolute;left:1481px;top:949px;font:42.500px/50px "Liberation Sans",sans-serif}
```
